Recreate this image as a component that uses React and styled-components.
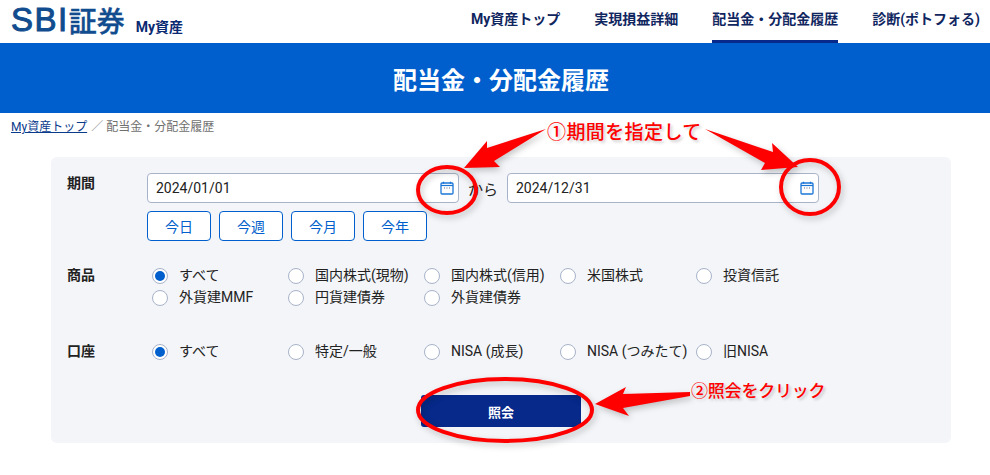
import React from 'react';
import styled, { createGlobalStyle } from 'styled-components';

const GlobalStyle = createGlobalStyle`
  html, body {
    margin: 0;
    padding: 0;
    background: #fff;
  }
  body {
    font-family: Roboto, "Noto Sans CJK JP", sans-serif;
    color: #222;
  }
  * {
    box-sizing: border-box;
  }
`;

const Page = styled.div`
  position: relative;
  width: 990px;
  height: 475px;
  overflow: hidden;
`;

const Header = styled.header`
  display: flex;
  justify-content: space-between;
  height: 43px;
  padding: 0 10px 0 11px;
`;

const Logo = styled.div`
  display: flex;
  align-items: flex-end;
  height: 40px;
`;

const LogoMark = styled.span`
  font-family: "Liberation Sans", sans-serif;
  font-size: 33px;
  line-height: 40px;
  letter-spacing: 1.5px;
  color: #104c8e;
  -webkit-text-stroke: 1px #104c8e;
`;

const LogoKanji = styled.span`
  font-family: "Noto Sans CJK JP", sans-serif;
  font-size: 28px;
  line-height: 40px;
  font-weight: 500;
  color: #104c8e;
  -webkit-text-stroke: 0.4px #104c8e;
`;

const LogoSub = styled.span`
  margin: 0 0 3px 11px;
  font-size: 14px;
  line-height: 20px;
  font-weight: 700;
  color: #0a2a72;
`;

const Nav = styled.nav`
  display: flex;
  gap: 34px;
`;

const NavItem = styled.a`
  height: 43px;
  padding-top: 9px;
  font-size: 14px;
  line-height: 20px;
  font-weight: 700;
  color: #10265f;
  border-bottom: 3px solid ${(p) => (p.$active ? '#06298a' : 'transparent')};
`;

const Banner = styled.div`
  display: flex;
  align-items: center;
  justify-content: center;
  height: 70px;
  padding-left: 12px;
  background: #005fcc;
`;

const Title = styled.h1`
  margin: 0;
  font-size: 24px;
  font-weight: 700;
  color: #fff;
`;

const Breadcrumb = styled.div`
  padding: 5px 0 0 11px;
  height: 44px;
  font-size: 12px;
  line-height: 18px;
  color: #6f6f6f;
`;

const Crumb = styled.a`
  color: #0a3a8c;
  text-decoration: underline;
`;

const Slash = styled.span`
  margin: 0 3px 0 4px;
  color: #a0a0a0;
`;

const Card = styled.section`
  width: 900px;
  height: 286px;
  margin-left: 51px;
  padding: 16px;
  background: #f3f5f8;
  border-radius: 6px;
`;

const Row = styled.div`
  display: flex;
  margin-top: ${(p) => p.$top || 0}px;
`;

const Label = styled.div`
  width: 80px;
  flex: none;
  font-size: 14px;
  line-height: 20px;
  font-weight: 700;
`;

const Fields = styled.div`
  display: flex;
  flex-direction: column;
  gap: 8px;
`;

const DateRow = styled.div`
  display: flex;
  align-items: center;
`;

const DateField = styled.div`
  display: flex;
  align-items: center;
  justify-content: space-between;
  width: 312px;
  height: 30px;
  padding: 0 4px 0 8px;
  background: #fff;
  border: 1px solid #a8b3c9;
  border-radius: 4px;
  font-size: 14px;
`;

const From = styled.span`
  width: 48px;
  text-align: center;
  font-size: 15px;
`;

const QuickButtons = styled.div`
  display: flex;
  gap: 8px;
`;

const QuickButton = styled.button`
  width: 64px;
  height: 30px;
  padding: 0;
  background: #fff;
  border: 1px solid #005fcc;
  border-radius: 4px;
  font-family: inherit;
  font-size: 14px;
  color: #005fcc;
`;

const RadioGrid = styled.div`
  display: grid;
  grid-template-columns: repeat(5, 136px);
  grid-auto-rows: 22px;
  padding-left: 5px;
`;

const RadioItem = styled.label`
  display: flex;
  align-items: center;
  gap: 11px;
  font-size: 14px;
  line-height: 20px;
  white-space: nowrap;
`;

const RadioText = styled.span`
  margin-bottom: 2px;
`;

const RadioMark = styled.span`
  display: flex;
  align-items: center;
  justify-content: center;
  flex: none;
  width: 16px;
  height: 16px;
  background: #fff;
  border: 1px solid #a8b3c9;
  border-radius: 50%;

  &::after {
    content: '';
    display: ${(p) => (p.$checked ? 'block' : 'none')};
    width: 10px;
    height: 10px;
    background: #005fcc;
    border-radius: 50%;
  }
`;

const SubmitRow = styled.div`
  display: flex;
  justify-content: center;
  margin-top: 32px;
`;

const SubmitButton = styled.button`
  width: 160px;
  height: 32px;
  padding: 0;
  background: #06298a;
  border: none;
  border-radius: 3px;
  font-family: inherit;
  font-size: 13px;
  font-weight: 700;
  color: #fff;
`;

const Overlay = styled.svg`
  position: absolute;
  top: 0;
  left: 0;
  pointer-events: none;
  filter: drop-shadow(2px 3px 3px rgba(0, 0, 0, 0.22));
`;

const Note = styled.div`
  position: absolute;
  left: ${(p) => p.$x}px;
  top: ${(p) => p.$y}px;
  font-size: ${(p) => p.$size}px;
  line-height: 24px;
  font-weight: 500;
  letter-spacing: ${(p) => p.$spacing}px;
  white-space: nowrap;
  color: #f00;
  text-shadow: 2px 2px 3px rgba(0, 0, 0, 0.2);
`;

const CalendarIcon = () => (
  <svg width="14" height="14" viewBox="0 0 14 14" fill="none">
    <rect x="1" y="2" width="12" height="11" rx="1" stroke="#1a76d6" strokeWidth="1.3" />
    <path d="M1 4.5h12" stroke="#1a76d6" strokeWidth="1.2" />
    <path d="M3.5 0.8v2M10.5 0.8v2" stroke="#1a76d6" strokeWidth="1.2" />
    <path d="M4 7h1M6.5 7h1M9 7h1" stroke="#6a6f80" strokeWidth="1" />
  </svg>
);

const products = [
  ['すべて', true],
  ['国内株式(現物)'],
  ['国内株式(信用)'],
  ['米国株式'],
  ['投資信託'],
  ['外貨建MMF'],
  ['円貨建債券'],
  ['外貨建債券'],
];

const accounts = [
  ['すべて', true],
  ['特定/一般'],
  ['NISA (成長)'],
  ['NISA (つみたて)'],
  ['旧NISA'],
];

const navItems = ['My資産トップ', '実現損益詳細', '配当金・分配金履歴', '診断(ポトフォる)'];

const Radios = ({ items }) => (
  <RadioGrid>
    {items.map(([text, checked]) => (
      <RadioItem key={text}>
        <RadioMark $checked={checked} />
        <RadioText>{text}</RadioText>
      </RadioItem>
    ))}
  </RadioGrid>
);

export default function App() {
  return (
    <Page>
      <GlobalStyle />
      <Header>
        <Logo>
          <LogoMark>SBI</LogoMark>
          <LogoKanji>証券</LogoKanji>
          <LogoSub>My資産</LogoSub>
        </Logo>
        <Nav>
          {navItems.map((item, i) => (
            <NavItem key={item} $active={i === 2}>
              {item}
            </NavItem>
          ))}
        </Nav>
      </Header>
      <Banner>
        <Title>配当金・分配金履歴</Title>
      </Banner>
      <Breadcrumb>
        <Crumb>My資産トップ</Crumb>
        <Slash>／</Slash>配当金・分配金履歴
      </Breadcrumb>
      <Card>
        <Row>
          <Label>期間</Label>
          <Fields>
            <DateRow>
              <DateField>
                2024/01/01
                <CalendarIcon />
              </DateField>
              <From>から</From>
              <DateField>
                2024/12/31
                <CalendarIcon />
              </DateField>
            </DateRow>
            <QuickButtons>
              <QuickButton>今日</QuickButton>
              <QuickButton>今週</QuickButton>
              <QuickButton>今月</QuickButton>
              <QuickButton>今年</QuickButton>
            </QuickButtons>
          </Fields>
        </Row>
        <Row $top={24}>
          <Label>商品</Label>
          <Radios items={products} />
        </Row>
        <Row $top={32}>
          <Label>口座</Label>
          <Radios items={accounts} />
        </Row>
        <SubmitRow>
          <SubmitButton>照会</SubmitButton>
        </SubmitRow>
      </Card>

      {/* 赤い注釈 */}
      <Overlay width="990" height="475" viewBox="0 0 990 475">
        <g fill="#f00">
          <polygon points="546,129 487,148 487,141 464,168 500,167 494,161" />
          <polygon points="705,129 773,152 772,143 798,167 761,170 765,163" />
          <polygon points="595,404 626,387 623,394 690,392 690,396 623,408 629,416" />
        </g>
        <g fill="none" stroke="#f00" strokeWidth="4">
          <ellipse cx="447" cy="190" rx="29" ry="23" />
          <ellipse cx="810" cy="187" rx="29" ry="27" />
          <ellipse cx="505" cy="410" rx="87" ry="31" />
        </g>
      </Overlay>
      <Note $x={547} $y={121} $size={19} $spacing={0.4}>①期間を指定して</Note>
      <Note $x={691} $y={379} $size={17} $spacing={-0.2}>②照会をクリック</Note>
    </Page>
  );
}
